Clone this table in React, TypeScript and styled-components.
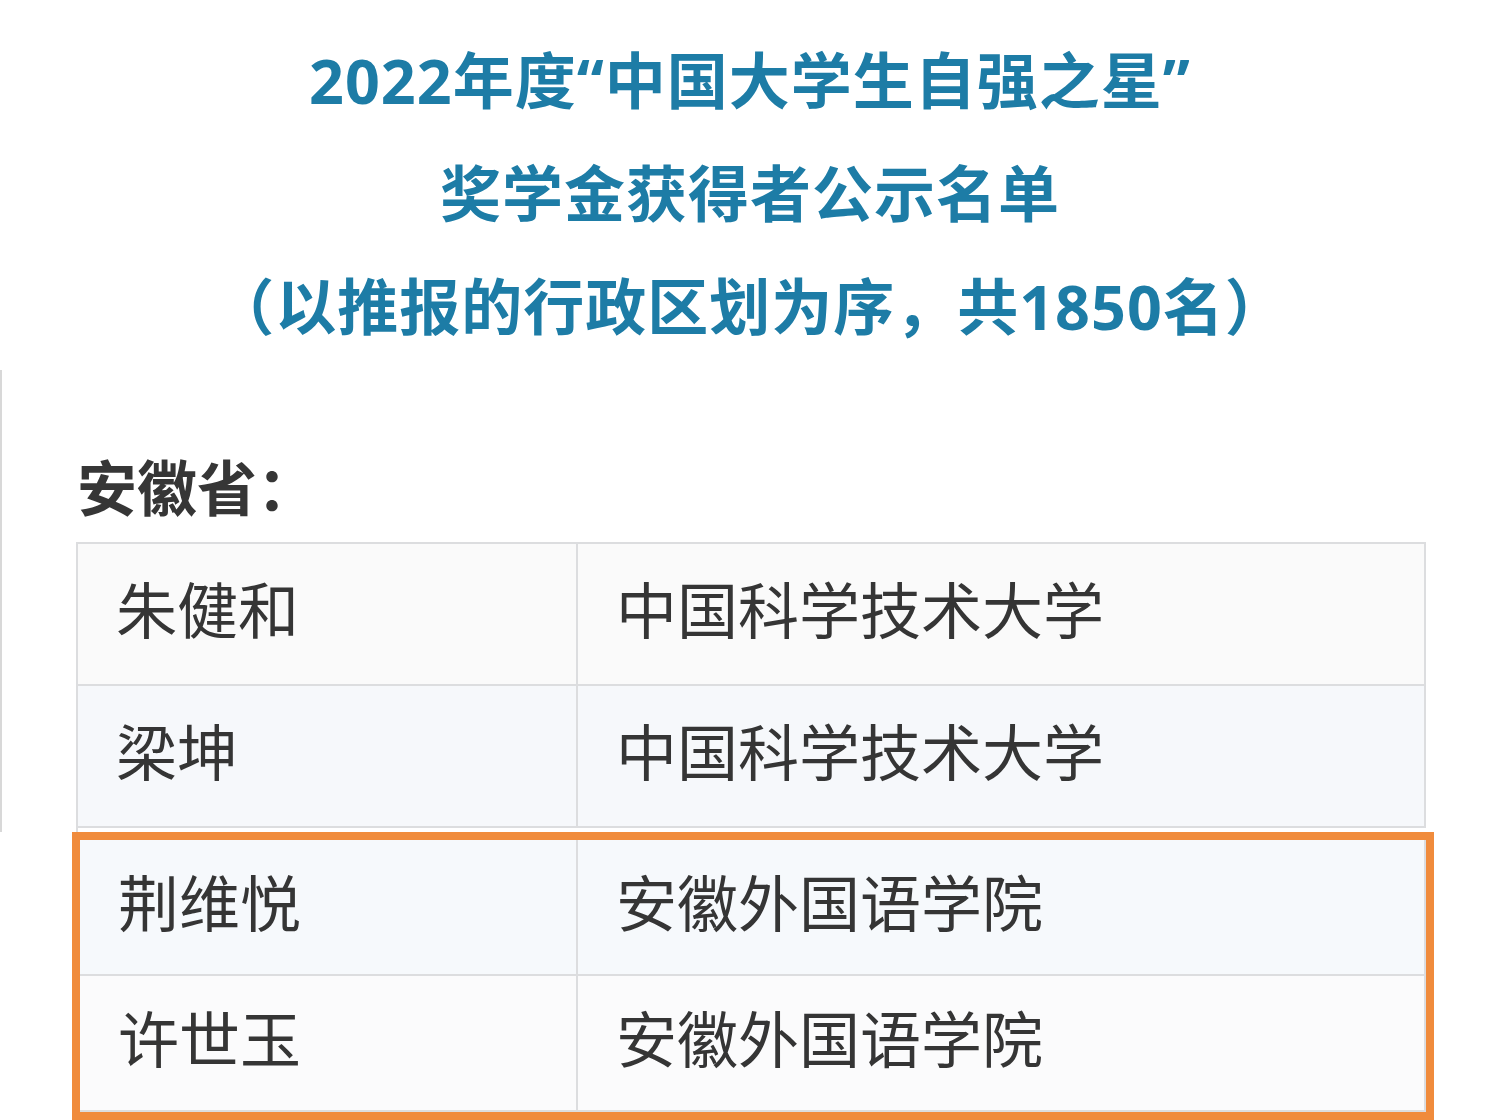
import React, { FunctionComponent } from 'react'
import styled, { createGlobalStyle } from 'styled-components'

const teal = '#1d7ca6'
const ink = '#353535'
const line = '#dcdddf'
const orange = '#f08b3c'

const GlobalStyle = createGlobalStyle`
  html, body {
    margin: 0;
    padding: 0;
    background: #ffffff;
  }
  body {
    font-family: 'Noto Sans CJK SC', 'Noto Sans', sans-serif;
  }
`

const Page = styled.div`
  position: relative;
  width: 1500px;
  height: 1120px;
  overflow: hidden;
  background: #ffffff;
`

// faint edge of the phone screenshot on the left
const EdgeLine = styled.div`
  position: absolute;
  left: 0;
  top: 370px;
  width: 2px;
  height: 462px;
  background: #d8d8d8;
`

const TitleBlock = styled.div`
  padding-top: 24px;
  text-align: center;
`

const TitleLine = styled.div`
  font-family: 'Noto Sans', 'Noto Sans CJK SC', sans-serif;
  font-size: 61px;
  font-weight: 700;
  line-height: 113px;
  color: ${teal};
  letter-spacing: 1px;
`

const Province = styled.h2`
  margin: 82px 0 17px 77px;
  font-size: 60px;
  font-weight: 700;
  line-height: 80px;
  color: #363636;
`

const Table = styled.div`
  margin-left: 76px;
  width: 1348px;
  border-top: 2px solid ${line};
  border-left: 2px solid ${line};
`

const Row = styled.div<{ $bg: string; $first: number; $height: number }>`
  display: grid;
  grid-template-columns: ${(p) => p.$first}px 1fr;
  height: ${(p) => p.$height}px;
  background: ${(p) => p.$bg};
`

const Cell = styled.div`
  display: flex;
  align-items: center;
  padding: 0 0 14px 38px;
  font-size: 61px;
  font-weight: 400;
  color: ${ink};
  border-right: 2px solid ${line};
  border-bottom: 2px solid ${line};
`

const Highlight = styled.div`
  margin: 4px -8px 0 -6px;
  border: 8px solid ${orange};
`

interface Winner {
  name: string
  school: string
  bg: string
}

const plain: Winner[] = [
  { name: '朱健和', school: '中国科学技术大学', bg: '#fafafa' },
  { name: '梁坤', school: '中国科学技术大学', bg: '#f6f8fb' },
]

const marked: Winner[] = [
  { name: '荆维悦', school: '安徽外国语学院', bg: '#f6f9fc' },
  { name: '许世玉', school: '安徽外国语学院', bg: '#fbfbfc' },
]

const App: FunctionComponent = () => {
  return (
    <Page>
      <GlobalStyle />
      <EdgeLine />
      <TitleBlock>
        <TitleLine>2022年度“中国大学生自强之星”</TitleLine>
        <TitleLine>奖学金获得者公示名单</TitleLine>
        <TitleLine>（以推报的行政区划为序，共1850名）</TitleLine>
      </TitleBlock>
      <Province>安徽省：</Province>
      <Table>
        {plain.map(({ name, school, bg }) => (
          <Row key={name} $bg={bg} $first={500} $height={142}>
            <Cell>{name}</Cell>
            <Cell>{school}</Cell>
          </Row>
        ))}
        <Highlight>
          {marked.map(({ name, school, bg }) => (
            <Row key={name} $bg={bg} $first={498} $height={136}>
              <Cell>{name}</Cell>
              <Cell>{school}</Cell>
            </Row>
          ))}
        </Highlight>
      </Table>
    </Page>
  )
}

export default App
